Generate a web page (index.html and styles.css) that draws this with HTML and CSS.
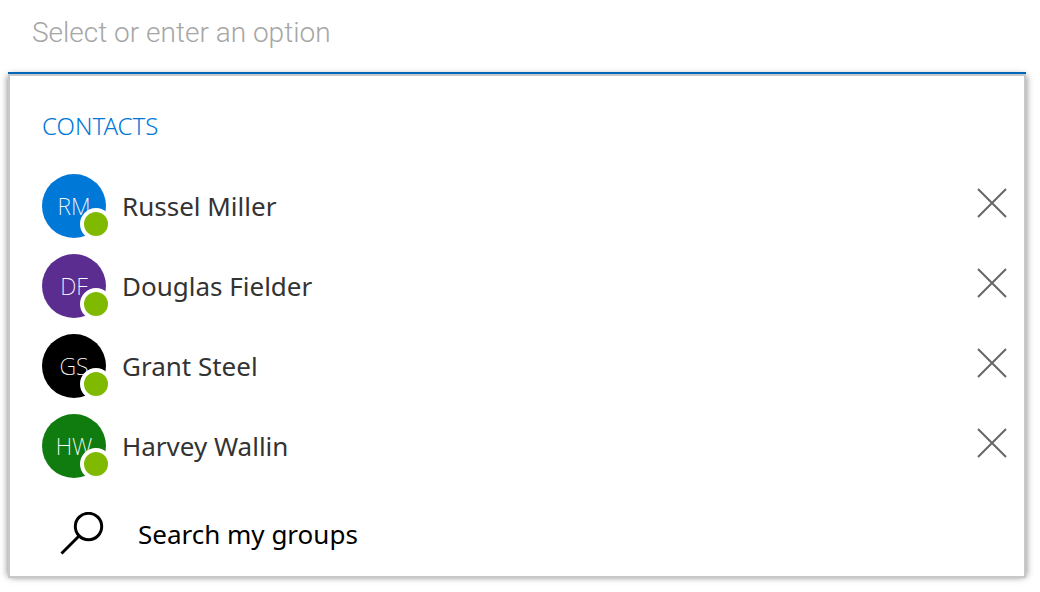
FILE: index.html
```
<!DOCTYPE html>
<html lang="en">
<head>
<meta charset="utf-8">
<meta name="viewport" content="width=device-width, initial-scale=1">
<title>Contact picker</title>
<link rel="stylesheet" href="styles.css">
</head>
<body>
<main class="picker">
  <input class="picker-input" type="text" placeholder="Select or enter an option" aria-label="Select or enter an option">
  <section class="panel" aria-labelledby="contacts-title">
    <h2 class="panel-title" id="contacts-title">CONTACTS</h2>
    <ul class="contacts">
      <li class="contact">
        <span class="avatar avatar-blue">RM<span class="presence"></span></span>
        <span class="name">Russel Miller</span>
        <button class="remove" type="button" aria-label="Remove Russel Miller"><svg class="remove-icon" viewBox="0 0 32 32"><path d="M2 2 30 30M30 2 2 30"/></svg></button>
      </li>
      <li class="contact">
        <span class="avatar avatar-purple">DF<span class="presence"></span></span>
        <span class="name">Douglas Fielder</span>
        <button class="remove" type="button" aria-label="Remove Douglas Fielder"><svg class="remove-icon" viewBox="0 0 32 32"><path d="M2 2 30 30M30 2 2 30"/></svg></button>
      </li>
      <li class="contact">
        <span class="avatar avatar-black">GS<span class="presence"></span></span>
        <span class="name">Grant Steel</span>
        <button class="remove" type="button" aria-label="Remove Grant Steel"><svg class="remove-icon" viewBox="0 0 32 32"><path d="M2 2 30 30M30 2 2 30"/></svg></button>
      </li>
      <li class="contact">
        <span class="avatar avatar-green">HW<span class="presence"></span></span>
        <span class="name">Harvey Wallin</span>
        <button class="remove" type="button" aria-label="Remove Harvey Wallin"><svg class="remove-icon" viewBox="0 0 32 32"><path d="M2 2 30 30M30 2 2 30"/></svg></button>
      </li>
    </ul>
    <button class="search" type="button">
      <svg class="search-icon" viewBox="0 0 44 44" aria-hidden="true"><circle cx="28.500" cy="14.500" r="13.200"/><path d="M19 24 1.500 41.500"/></svg>
      Search my groups
    </button>
  </section>
</main>
</body>
</html>
```
FILE: styles.css
```
* {
  box-sizing: border-box;
}

body {
  margin: 0;
  background: #fff;
  color: #333;
  font-family: "Noto Sans", "Open Sans", sans-serif;
}

.picker {
  display: flex;
  flex-direction: column;
  padding: 0 14px 14px 8px;
}

.picker-input {
  position: relative;
  z-index: 1;
  width: 100%;
  height: 74px;
  padding: 0 24px 8px;
  border: 0;
  border-bottom: 2px solid #0067b8;
  outline: 0;
  background: transparent;
  font-family: Roboto, "Liberation Sans", sans-serif;
  font-size: 28px;
  font-weight: 300;
}

.picker-input::placeholder {
  color: #a6a6a6;
  opacity: 1;
}

.panel {
  padding: 30px 16px 10px 32px;
  border: 2px solid #c8c8c8;
  background: #fff;
  box-shadow: 3px 0 6px -2px rgba(0, 0, 0, 0.3), -3px 0 6px -2px rgba(0, 0, 0, 0.3), 0 0 8px rgba(0, 0, 0, 0.15);
}

.panel-title {
  margin: 0 0 28px;
  color: #0078d7;
  font-size: 24px;
  font-weight: 300;
  line-height: 40px;
}

.contacts {
  display: flex;
  flex-direction: column;
  gap: 16px;
  margin: 0;
  padding: 0;
  list-style: none;
}

.contact {
  display: flex;
  align-items: center;
  gap: 16px;
}

.avatar {
  position: relative;
  width: 64px;
  border-radius: 50%;
  color: #fff;
  font-size: 23px;
  font-weight: 200;
  line-height: 64px;
  text-align: center;
}

.avatar-blue { background: #0078d7; }
.avatar-purple { background: #5c2d91; }
.avatar-black { background: #000; }
.avatar-green { background: #107c10; }

.presence {
  position: absolute;
  right: -6px;
  bottom: -2px;
  width: 32px;
  height: 32px;
  border: 4px solid #fff;
  border-radius: 50%;
  background: #7fba00;
}

.name {
  flex: 1;
  font-size: 26px;
  line-height: 64px;
}

.remove {
  padding: 0 0 6px;
  border: 0;
  background: none;
}

.remove-icon {
  display: block;
  width: 32px;
  height: 32px;
  fill: none;
  stroke: #666;
  stroke-width: 2;
}

.search {
  display: flex;
  align-items: center;
  gap: 34px;
  width: 100%;
  margin-top: 24px;
  padding: 0 18px;
  border: 0;
  background: none;
  color: #000;
  font-family: inherit;
  font-size: 26px;
  line-height: 64px;
  text-align: left;
}

.search-icon {
  width: 44px;
  height: 44px;
  fill: none;
  stroke: #000;
  stroke-width: 3;
}
```
